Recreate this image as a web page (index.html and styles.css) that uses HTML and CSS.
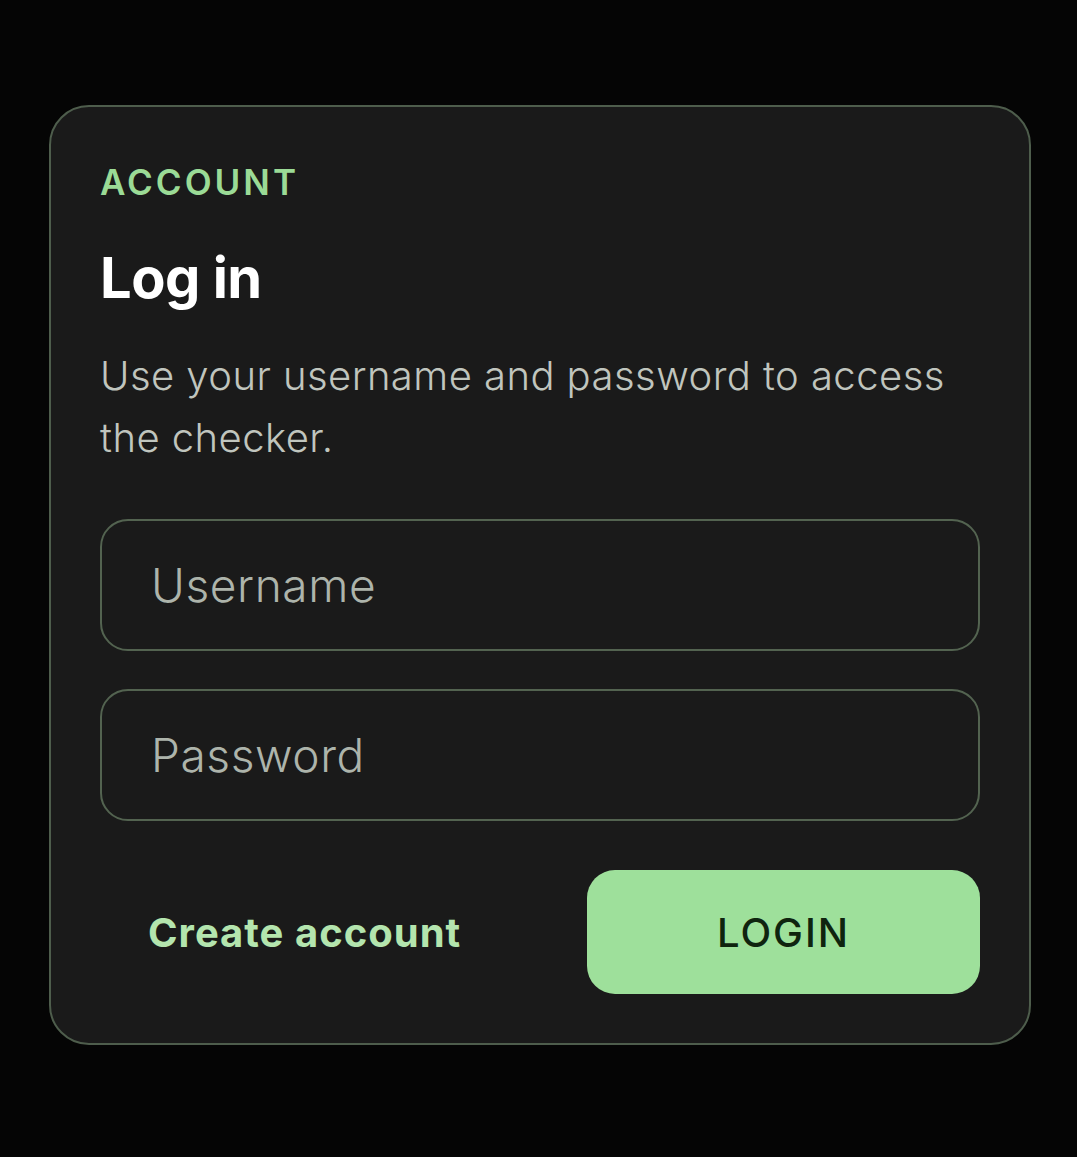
FILE: index.html
```html
<!DOCTYPE html>
<html lang="en">
<head>
    <meta charset="UTF-8">
    <meta name="viewport" content="width=device-width, initial-scale=1.0">
    <title>Log in</title>
    <link rel="stylesheet" href="styles.css">
</head>
<body>
    <div class="login-card">
        <div class="eyebrow">ACCOUNT</div>
        <h1 class="title">Log in</h1>
        <p class="lead">Use your username and password to access the checker.</p>

        <form class="login-form" onsubmit="return false">
            <input class="field" type="text" placeholder="Username">
            <input class="field" type="password" placeholder="Password">

            <div class="actions">
                <a class="link-button" href="#">Create account</a>
                <button class="primary-button" type="submit">LOGIN</button>
            </div>
        </form>
    </div>
</body>
</html>
```

FILE: styles.css
```css
body {
    margin: 0;
    padding: 105px 0 0 49px;
    background: #050505;
    font-family: Inter, "Noto Sans", sans-serif;
}
.login-card {
    box-sizing: border-box;
    width: 982px;
    height: 940px;
    padding: 54px 49px 48px;
    background: #1a1a1a;
    border: 2px solid #4e5d4c;
    border-radius: 40px;
}
.eyebrow {
    font-size: 35px;
    line-height: 42px;
    font-weight: 600;
    letter-spacing: 3px;
    color: #9bdb96;
}
.title {
    margin: 42px 0 0;
    font-size: 56px;
    line-height: 66px;
    font-weight: 700;
    letter-spacing: -0.5px;
    color: #ffffff;
}
.lead {
    margin: 34px 0 0;
    font-size: 40px;
    line-height: 62px;
    font-weight: 300;
    letter-spacing: 0.45px;
    color: #c0c5be;
}
.login-form {
    margin-top: 50px;
    display: flex;
    flex-direction: column;
    gap: 38px;
}
.field {
    box-sizing: border-box;
    width: 100%;
    height: 132px;
    padding: 0 49px;
    background: transparent;
    border: 2px solid #536350;
    border-radius: 28px;
    font-family: inherit;
    font-size: 46px;
    font-weight: 300;
    letter-spacing: 0.6px;
    color: #e0e4de;
    outline: none;
}
.field::placeholder {
    color: #adb4ab;
}
.actions {
    margin-top: 11px;
    display: flex;
    align-items: center;
    justify-content: space-between;
}
.link-button {
    padding-left: 48px;
    font-size: 40px;
    font-weight: 700;
    letter-spacing: 1px;
    color: #b4e5ae;
    text-decoration: none;
}
.primary-button {
    width: 393px;
    height: 124px;
    background: #9ee09b;
    border: none;
    border-radius: 28px;
    font-family: inherit;
    font-size: 40px;
    font-weight: 500;
    letter-spacing: 2px;
    color: #0f240f;
    cursor: pointer;
}
```
